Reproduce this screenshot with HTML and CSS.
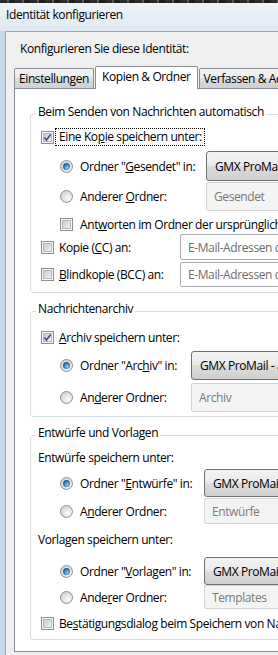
FILE: index.html
```html
<!DOCTYPE html>
<html lang="de">
<head>
    <meta charset="UTF-8">
    <meta name="viewport" content="width=device-width, initial-scale=1.0">
    <title>Identität konfigurieren</title>
    <link rel="stylesheet" href="styles.css">
</head>
<body>
    <div class="topstrip"></div>
    <div class="window">
        <div class="titlebar">Identität konfigurieren</div>
        <div class="client">
            <div class="intro">Konfigurieren Sie diese Identität:</div>
            <div class="tabs">
                <div class="tab">Einstellungen</div>
                <div class="tab selected">Kopien &amp; Ordner</div>
                <div class="tab">Verfassen &amp; Adressieren</div>
            </div>
            <div class="panel">
                <!-- Gesendete Nachrichten -->
                <fieldset class="group g-send">
                    <legend>Beim Senden von Nachrichten automatisch</legend>
                    <div class="row h20 mt3">
                        <span class="cb checked"><svg viewBox="0 0 9 9" width="9" height="9"><path d="M1.5 4.6 L3.6 7 L7.6 1.6" fill="none" stroke="#3d4f86" stroke-width="1.6"/></svg></span>
                        <span class="lbl focus">Eine Ko<u>p</u>ie speichern unter:</span>
                    </div>
                    <div class="row opt h30 mt4">
                        <span class="rb on"></span>
                        <span class="lbl col-send">Ordner "<u>G</u>esendet" in:</span>
                        <div class="menu">GMX ProMail - anna.muster@gmx.de</div>
                    </div>
                    <div class="row opt h29 mt1">
                        <span class="rb"></span>
                        <span class="lbl col-send">Anderer <u>O</u>rdner:</span>
                        <div class="field disabled">Gesendet</div>
                    </div>
                    <div class="row opt h20 mt3">
                        <span class="cb"></span>
                        <span class="lbl">Ant<u>w</u>orten im Ordner der ursprünglichen Nachricht ablegen</span>
                    </div>
                    <div class="row h26">
                        <span class="cb"></span>
                        <span class="lbl col-cc">Kopie (<u>C</u>C) an:</span>
                        <div class="field">E-Mail-Adressen durch Kommas trennen</div>
                    </div>
                    <div class="row h25 mt2">
                        <span class="cb"></span>
                        <span class="lbl col-cc"><u>B</u>lindkopie (BCC) an:</span>
                        <div class="field">E-Mail-Adressen durch Kommas trennen</div>
                    </div>
                </fieldset>

                <!-- Archiv -->
                <fieldset class="group g-archive">
                    <legend>Nachrichtenarchiv</legend>
                    <div class="row h20 mt6">
                        <span class="cb checked"><svg viewBox="0 0 9 9" width="9" height="9"><path d="M1.5 4.6 L3.6 7 L7.6 1.6" fill="none" stroke="#3d4f86" stroke-width="1.6"/></svg></span>
                        <span class="lbl"><u>A</u>rchiv speichern unter:</span>
                    </div>
                    <div class="row opt h29 mt4">
                        <span class="rb on"></span>
                        <span class="lbl col-archive">Ordner "Arc<u>h</u>iv" in:</span>
                        <div class="menu">GMX ProMail - anna.muster@gmx.de</div>
                    </div>
                    <div class="row opt h29 mt3">
                        <span class="rb"></span>
                        <span class="lbl col-archive">An<u>d</u>erer Ordner:</span>
                        <div class="field disabled">Archiv</div>
                    </div>
                </fieldset>

                <!-- Entwürfe und Vorlagen -->
                <fieldset class="group g-drafts">
                    <legend>Entwürfe und Vorlagen</legend>
                    <div class="row sub h20 mt2">Entwürfe speichern unter:</div>
                    <div class="row opt h28 mt2">
                        <span class="rb on"></span>
                        <span class="lbl col-drafts">Ordner "<u>E</u>ntwürfe" in:</span>
                        <div class="menu">GMX ProMail - anna.muster@gmx.de</div>
                    </div>
                    <div class="row opt h26 mt1">
                        <span class="rb"></span>
                        <span class="lbl col-drafts">A<u>n</u>derer Ordner:</span>
                        <div class="field disabled">Entwürfe</div>
                    </div>
                    <div class="row sub h20 mt5">Vorlagen speichern unter:</div>
                    <div class="row opt h28 mt8">
                        <span class="rb on"></span>
                        <span class="lbl col-drafts">Ordner "<u>V</u>orlagen" in:</span>
                        <div class="menu">GMX ProMail - anna.muster@gmx.de</div>
                    </div>
                    <div class="row opt h24">
                        <span class="rb"></span>
                        <span class="lbl col-drafts">Ande<u>r</u>er Ordner:</span>
                        <div class="field disabled">Templates</div>
                    </div>
                    <div class="row h20 mt4">
                        <span class="cb"></span>
                        <span class="lbl">Be<u>s</u>tätigungsdialog beim Speichern von Nachrichten als Entwurf oder Vorlage</span>
                    </div>
                </fieldset>
            </div>
        </div>
    </div>
</body>
</html>
```

FILE: styles.css
```css
body {
    margin: 0;
    width: 278px;
    height: 655px;
    overflow: hidden;
    background: #c6d8ec;
    font-family: "Open Sans", "Noto Sans", sans-serif;
    font-size: 12px;
    letter-spacing: -0.4px;
    color: #000;
}
.topstrip {
    height: 3px;
    background: repeating-linear-gradient(90deg, #2b2b2b 0 7px, #5a5a5a 7px 9px, #1e1e1e 9px 15px);
}
.window {
    width: 560px;
}
.titlebar {
    height: 28px;
    line-height: 24px;
    padding-left: 6px;
    background: linear-gradient(#eef3f8, #dfe8f2);
}
.client {
    margin-left: 5px;
    height: 640px;
    border: 1px solid #9aa6b4;
    border-right: none;
    background: #f0f0f0;
    padding-left: 8px;
}
.intro {
    line-height: 16px;
    padding: 9px 0 0 6px;
}
.tabs {
    display: flex;
    align-items: flex-end;
    height: 22px;
    margin-top: 9px;
}
.tab {
    height: 20px;
    line-height: 19px;
    padding: 0 4px;
    box-sizing: border-box;
    border: 1px solid #898c95;
    border-bottom: none;
    border-radius: 2px 2px 0 0;
    background: linear-gradient(#f3f3f3, #ebebeb 50%, #dddddd 50%, #cfcfcf);
}
.tab.selected {
    height: 23px;
    line-height: 20px;
    padding: 0 6px;
    margin: 0 1px -1px 1px;
    background: #fff;
    position: relative;
    z-index: 1;
}
.panel {
    border: 1px solid #898c95;
    border-right: none;
    background: #fff;
    height: 547px;
    padding: 15px 0 0 15px;
}
.group {
    margin: 0;
    padding: 0 0 5px 0;
    border: 1px solid #d5dfe5;
    border-radius: 3px;
}
.group legend {
    margin-left: 5px;
    padding: 0 2px 4px 2px;
    line-height: 16px;
}
.g-archive {
    margin-top: 8px;
    padding-bottom: 4px;
}
.g-drafts {
    margin-top: 8px;
    padding-bottom: 6px;
}
.row {
    display: flex;
    align-items: center;
    padding-left: 10px;
    white-space: nowrap;
}
.row.opt {
    padding-left: 29px;
}
.row.sub {
    padding-left: 7px;
}
.h20 { height: 20px; }
.h24 { height: 24px; }
.h25 { height: 25px; }
.h26 { height: 26px; }
.h28 { height: 28px; }
.h29 { height: 29px; }
.h30 { height: 30px; }
.mt1 { margin-top: 1px; }
.mt2 { margin-top: 2px; }
.mt3 { margin-top: 3px; }
.mt4 { margin-top: 4px; }
.mt5 { margin-top: 5px; }
.mt6 { margin-top: 6px; }
.mt8 { margin-top: 8px; }

.lbl {
    margin-left: 5px;
    flex: none;
}
.row.opt .lbl {
    margin-left: 7px;
}
.lbl.focus {
    margin-left: 1px;
    padding: 0 2px 0 3px;
    border: 1px dotted #000;
    line-height: 16px;
}
.col-send { width: 126px; }
.col-archive { width: 111px; }
.col-drafts { width: 124px; }
.col-cc { width: 121px; }

/* Kontrollkästchen und Optionsfelder im Stil von Windows 7 */
.cb {
    flex: none;
    width: 13px;
    height: 13px;
    box-sizing: border-box;
    border: 1px solid #8e8f8f;
    background: #f6f6f6;
    position: relative;
}
.cb::before {
    content: "";
    position: absolute;
    left: 1px;
    top: 1px;
    width: 7px;
    height: 7px;
    border: 1px solid #b4b8bd;
    background: linear-gradient(135deg, #c9ccd1, #eef0f2);
}
.cb svg {
    position: absolute;
    left: 1px;
    top: 1px;
    z-index: 1;
}
.rb {
    flex: none;
    width: 13px;
    height: 13px;
    box-sizing: border-box;
    border: 1px solid #8e8f8f;
    border-radius: 50%;
    background: radial-gradient(circle at 65% 65%, #fafafa, #d6d7d9 70%);
    position: relative;
}
.rb.on::after {
    content: "";
    position: absolute;
    left: 2px;
    top: 2px;
    width: 7px;
    height: 7px;
    border-radius: 50%;
    background: radial-gradient(circle at 60% 65%, #8fd1f5, #2a6cb0 55%, #17325e);
}

.menu {
    flex: none;
    width: 260px;
    height: 100%;
    box-sizing: border-box;
    border: 1px solid #707070;
    border-radius: 3px;
    padding-left: 8px;
    display: flex;
    align-items: center;
    background: linear-gradient(#f2f2f2, #ebebeb 50%, #dddddd 50%, #cfcfcf);
}
.field {
    flex: none;
    width: 260px;
    height: 100%;
    box-sizing: border-box;
    border: 1px solid #abadb3;
    border-radius: 2px;
    padding-left: 7px;
    display: flex;
    align-items: center;
    background: #fff;
    color: #6d6d6d;
}
.field.disabled {
    border-color: #d4d4d4;
    background: #f4f4f4;
    color: #7a7a7a;
}
```
